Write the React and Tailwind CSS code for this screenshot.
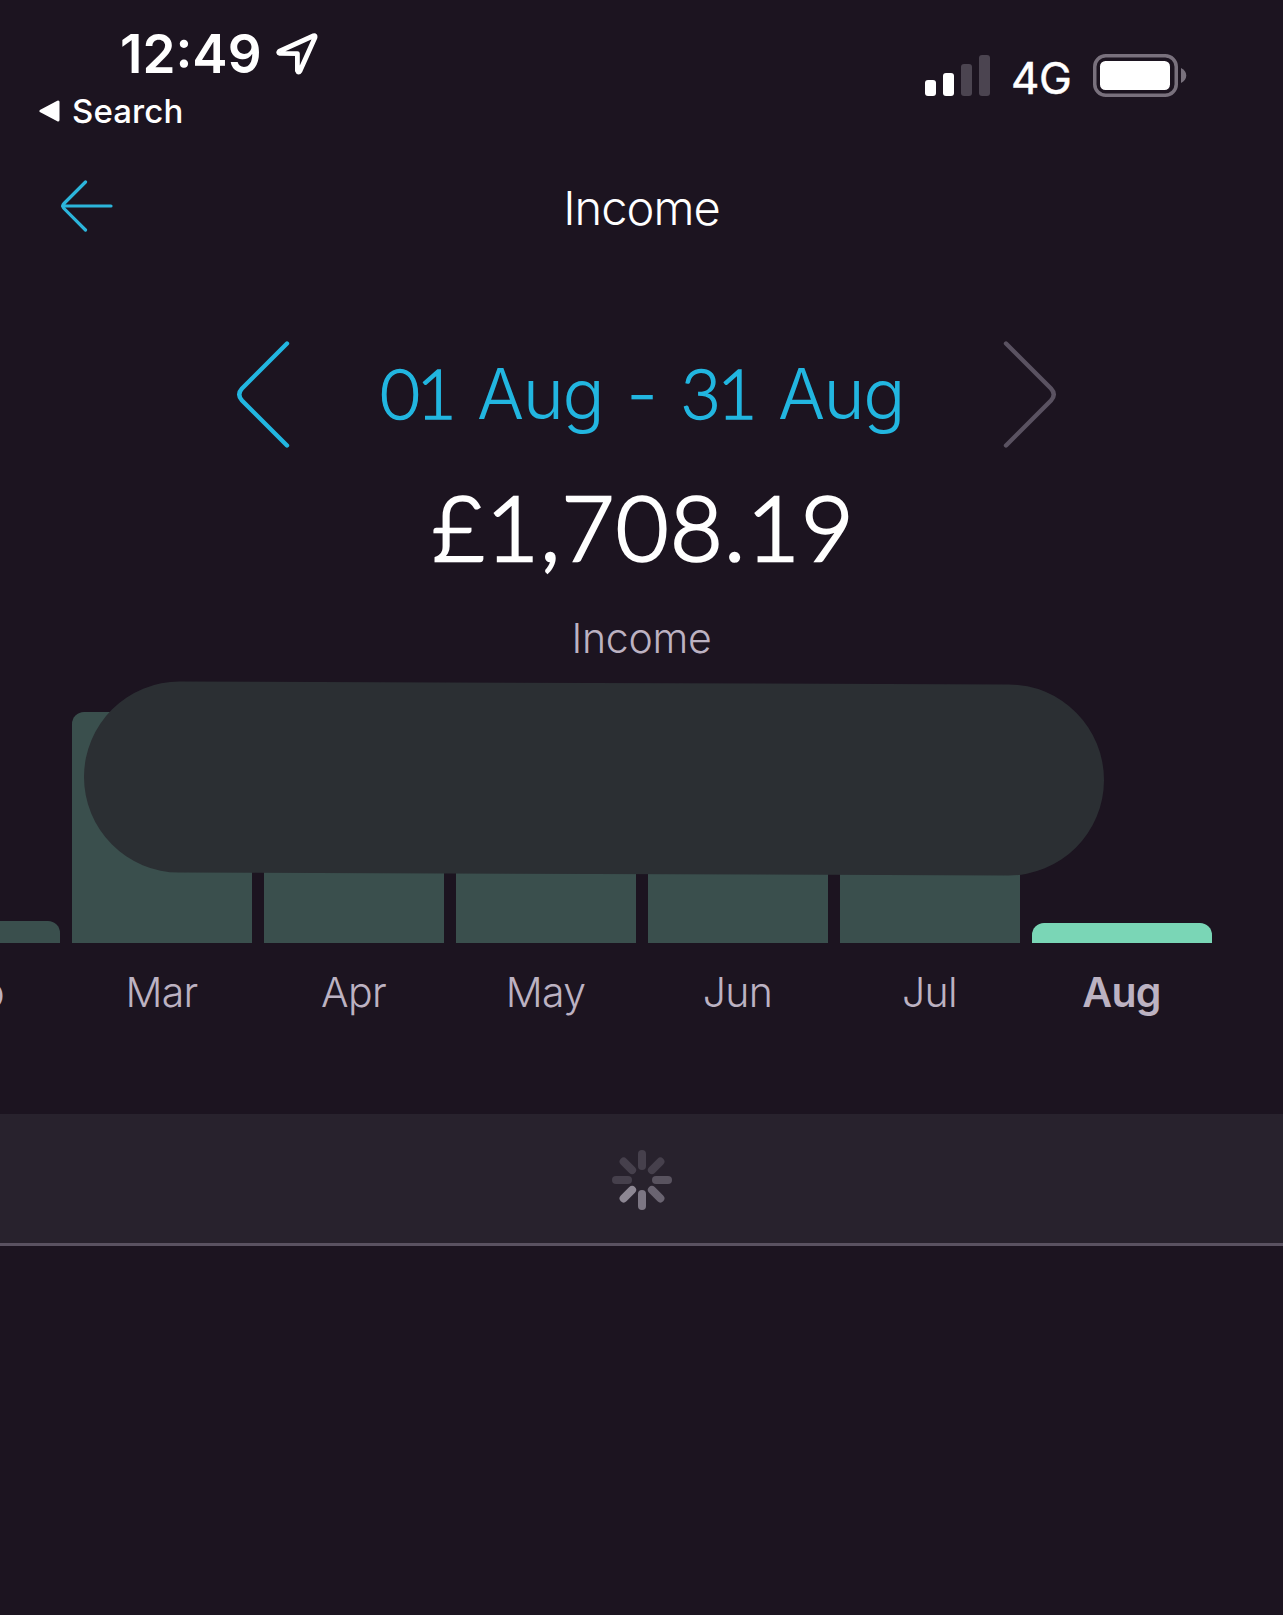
import React, { useState } from "react";

const months = [
  { name: "Feb", height: 22 },
  { name: "Mar", height: 231 },
  { name: "Apr", height: 150 },
  { name: "May", height: 150 },
  { name: "Jun", height: 150 },
  { name: "Jul", height: 150 },
  { name: "Aug", height: 20 },
];

const spokes = [
  { angle: 0, color: "#46404c" },
  { angle: 45, color: "#46404c" },
  { angle: 90, color: "#59535f" },
  { angle: 135, color: "#6a6471" },
  { angle: 180, color: "#7c7683" },
  { angle: 225, color: "#8d8793" },
  { angle: 270, color: "#46404c" },
  { angle: 315, color: "#46404c" },
];

const StatusBar = () => {
  return (
    <div className="flex h-[140px] justify-between text-white">
      <div className="pt-[27px] pl-[39px]">
        <div className="flex h-[53px] items-center gap-[14px] pl-[81px]">
          <span className="text-[53px] leading-[52px] font-semibold">
            12:49
          </span>
          <svg width="42" height="42" viewBox="0 0 42 42" fill="none">
            <path
              d="M37.6 2.8 L3.4 18.2 Q1.8 19.8 3.8 20.3 L21.4 20.6 L21.4 37.6 Q22.4 40.4 24.2 37.6 L39 4.4 Q39.4 2 37.6 2.8 Z"
              stroke="white"
              strokeWidth="4.8"
              strokeLinejoin="round"
            />
          </svg>
        </div>
        <div className="mt-[15px] flex items-center gap-3">
          <svg width="21" height="22" viewBox="0 0 21 22">
            <path
              d="M2 11 L19 2 L19 20 Z"
              fill="white"
              stroke="white"
              strokeWidth="3"
              strokeLinejoin="round"
            />
          </svg>
          <span className="text-[33px] leading-8 font-medium tracking-[0.1px]">
            Search
          </span>
        </div>
      </div>
      <div className="flex h-[156px] items-center pr-24">
        <div className="mb-[5px] flex h-[41px] items-end gap-[7px]">
          <div className="h-4 w-[11px] rounded-[3px] bg-white" />
          <div className="h-[23px] w-[11px] rounded-[3px] bg-white" />
          <div className="h-8 w-[11px] rounded-[3px] bg-[#4b4450]" />
          <div className="h-[41px] w-[11px] rounded-[3px] bg-[#4b4450]" />
        </div>
        <span className="ml-[21px] w-[82px] text-[44px] leading-[44px] tracking-[-0.5px] [-webkit-text-stroke:0.5px]">
          4G
        </span>
        <svg width="94" height="43" viewBox="0 0 94 43" className="mb-[5px]">
          <rect
            x="1.75"
            y="1.75"
            width="81.5"
            height="39.5"
            rx="11"
            fill="none"
            stroke="#79717d"
            strokeWidth="3.5"
          />
          <rect x="7" y="7" width="70" height="29" rx="5.5" fill="white" />
          <path d="M88 14 C95 17 95 26 88 29 Z" fill="#79717d" />
        </svg>
      </div>
    </div>
  );
};

const Header = () => {
  return (
    <div className="grid h-[136px] grid-cols-3 items-center px-[60px]">
      <button className="mb-1 w-fit">
        <svg width="54" height="54" viewBox="0 0 54 54" fill="none">
          <path
            d="M25.5 3 L4 24.5 Q1.6 27 4 29.5 L25.5 51 M2.5 27 H51"
            stroke="#2cb5db"
            strokeWidth="3.2"
            strokeLinecap="round"
          />
        </svg>
      </button>
      <h1 className="mb-0.5 text-center text-[47px] leading-none font-light tracking-[-1px] text-white">
        Income
      </h1>
    </div>
  );
};

const DateLabel = ({ day, month }) => {
  return (
    <span className="flex items-baseline gap-[24px]">
      <span className="font-[Lato] text-[69px] tracking-[-3.5px] [-webkit-text-stroke:1.4px]">
        {day}
      </span>
      <span className="text-[70px] tracking-[-1.5px]">{month}</span>
    </span>
  );
};

const DateSwitcher = () => {
  return (
    <div className="flex h-[107px] items-center justify-between pr-[226px] pl-[236px]">
      <button>
        <svg width="54" height="107" viewBox="0 0 54 107" fill="none">
          <path
            d="M51 2.5 L6 47.5 Q0.5 53.5 6 59.5 L51 104.5"
            stroke="#22b6e0"
            strokeWidth="4.4"
            strokeLinecap="round"
          />
        </svg>
      </button>
      <h2 className="mr-[9px] mb-0.5 flex items-baseline gap-[23px] leading-none font-light whitespace-nowrap text-[#22b6e0]">
        <DateLabel day="01" month="Aug" />
        <span className="text-[70px]">-</span>
        <DateLabel day="31" month="Aug" />
      </h2>
      <button disabled>
        <svg width="54" height="107" viewBox="0 0 54 107" fill="none">
          <path
            d="M3 2.5 L48 47.5 Q53.5 53.5 48 59.5 L3 104.5"
            stroke="#5a5261"
            strokeWidth="4.4"
            strokeLinecap="round"
          />
        </svg>
      </button>
    </div>
  );
};

const Chart = ({ selected, onSelect }) => {
  return (
    <div className="relative overflow-hidden">
      <div className="-ml-[120px] flex w-max gap-3">
        {months.map((month) => (
          <div
            key={month.name}
            className="w-[180px] shrink-0"
            onClick={() => onSelect(month.name)}
          >
            <div className="flex h-[270px] items-end">
              <div
                className={`w-full rounded-t-xl ${
                  selected === month.name ? "bg-[#7ad6b6]" : "bg-[#3a4f4d]"
                }`}
                style={{ height: month.height }}
              />
            </div>
            <p
              className={`flex h-[98px] items-center justify-center pt-0.5 pr-px text-[41px] tracking-[-0.7px] text-[#bcb2c2] ${
                selected === month.name ? "font-semibold" : "font-light"
              }`}
            >
              {month.name}
            </p>
          </div>
        ))}
      </div>
      <div className="absolute top-[10px] left-[84px] h-[191px] w-[1020px] rotate-[0.2deg] rounded-full bg-[#2b2f33]" />
    </div>
  );
};

const Spinner = () => {
  return (
    <svg width="60" height="60" viewBox="-30 -30 60 60">
      {spokes.map((spoke) => (
        <rect
          key={spoke.angle}
          x="-4"
          y="-30"
          width="8"
          height="20"
          rx="4"
          fill={spoke.color}
          transform={`rotate(${spoke.angle})`}
        />
      ))}
    </svg>
  );
};

const App = () => {
  const [selected, setSelected] = useState("Aug");

  return (
    <div className="min-h-screen w-full overflow-hidden bg-[#1c1420] font-[Inter,sans-serif]">
      <StatusBar />
      <Header />
      <div className="pt-[65px]">
        <DateSwitcher />
        <p className="flex h-[155px] items-center justify-center pb-px pl-1 font-[Lato] text-[91px] leading-none font-light tracking-[1.4px] text-white [-webkit-text-stroke:2.6px]">
          £1,708.19
        </p>
        <p className="flex h-[70px] items-center justify-center pt-0.5 text-[41px] font-light tracking-[-0.3px] text-[#bcb2c2]">
          Income
        </p>
      </div>
      <Chart selected={selected} onSelect={setSelected} />
      <div className="mt-[73px] flex h-[132px] items-center justify-center border-b-3 border-[#5a5261] bg-[#28222d] pt-0.5">
        <Spinner />
      </div>
    </div>
  );
};

export default App;
